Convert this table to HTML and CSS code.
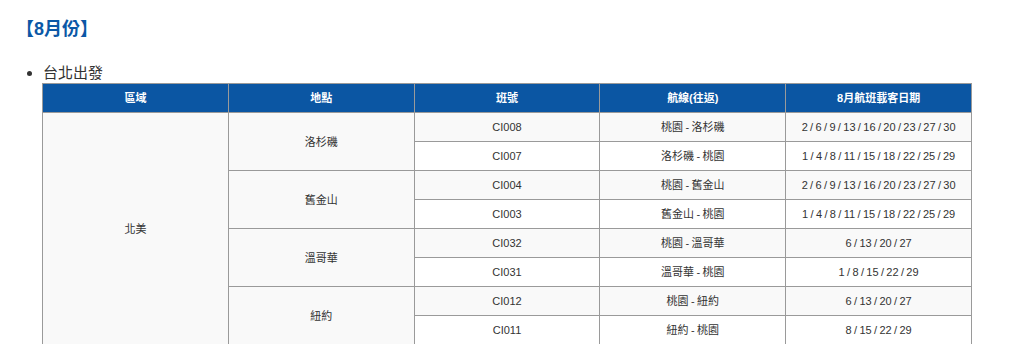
FILE: index.html
```html
<!DOCTYPE html>
<html lang="zh-Hant">
<head>
<meta charset="utf-8">
<link rel="stylesheet" href="styles.css">
</head>
<body>
<div class="page">
  <h3 class="month">【8月份】</h3>
  <ul class="list">
    <li class="item">台北出發
      <table class="sched">
        <thead>
          <tr><th>區域</th><th>地點</th><th>班號</th><th>航線(往返)</th><th>8月航班載客日期</th></tr>
        </thead>
        <tbody>
          <tr><td rowspan="8">北美</td><td rowspan="2">洛杉磯</td><td>CI008</td><td>桃園 - 洛杉磯</td><td>2 / 6 / 9 / 13 / 16 / 20 / 23 / 27 / 30</td></tr>
          <tr><td>CI007</td><td>洛杉磯 - 桃園</td><td>1 / 4 / 8 / 11 / 15 / 18 / 22 / 25 / 29</td></tr>
          <tr><td rowspan="2">舊金山</td><td>CI004</td><td>桃園 - 舊金山</td><td>2 / 6 / 9 / 13 / 16 / 20 / 23 / 27 / 30</td></tr>
          <tr><td>CI003</td><td>舊金山 - 桃園</td><td>1 / 4 / 8 / 11 / 15 / 18 / 22 / 25 / 29</td></tr>
          <tr><td rowspan="2">溫哥華</td><td>CI032</td><td>桃園 - 溫哥華</td><td>6 / 13 / 20 / 27</td></tr>
          <tr><td>CI031</td><td>溫哥華 - 桃園</td><td>1 / 8 / 15 / 22 / 29</td></tr>
          <tr><td rowspan="2">紐約</td><td>CI012</td><td>桃園 - 紐約</td><td>6 / 13 / 20 / 27</td></tr>
          <tr><td>CI011</td><td>紐約 - 桃園</td><td>8 / 15 / 22 / 29</td></tr>
        </tbody>
      </table>
    </li>
  </ul>
</div>
</body>
</html>
```
FILE: styles.css
```css
html, body {
  margin: 0;
  padding: 0;
  background: #ffffff;
}
body {
  font-family: "Liberation Sans", Arial, "Noto Sans CJK TC", sans-serif;
  color: #333333;
}
.page {
  padding: 18px 16px 0 16px;
}
.month {
  margin: 0;
  font-size: 18px;
  line-height: 22px;
  font-weight: bold;
  color: #0b58a6;
}
.list {
  margin: 23px 0 0 0;
  padding-left: 27px;
  font-size: 15px;
  line-height: 20px;
  color: #333333;
}
.item {
  margin: 0;
}
.sched {
  border-collapse: collapse;
  width: 930px;
  margin-left: -1px;
  table-layout: fixed;
  font-size: 11px;
  color: #333333;
}
.sched th,
.sched td {
  border: 1px solid #9a9a9a;
  text-align: center;
  vertical-align: middle;
  height: 28px;
  padding: 0 4px;
  line-height: 14px;
}
.sched td {
  word-spacing: -0.7px;
}
.sched th {
  background: #0b56a3;
  color: #ffffff;
  font-weight: bold;
}
.sched tbody tr {
  background: #ffffff;
}
.sched tbody tr:nth-child(odd) {
  background: #f9f9f9;
}
```
